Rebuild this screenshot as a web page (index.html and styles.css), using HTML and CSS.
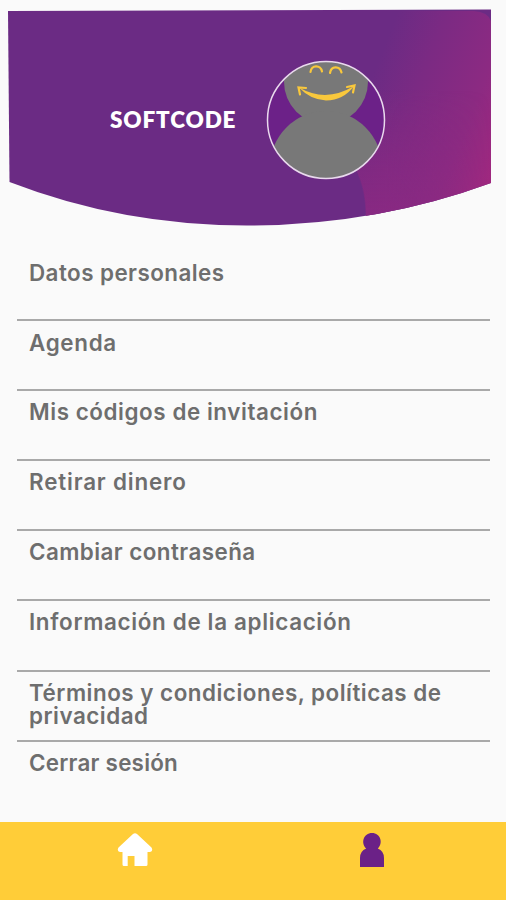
FILE: index.html
```html
<!DOCTYPE html>
<html lang="es">
<head>
<meta charset="utf-8">
<title>Softcode</title>
<link rel="stylesheet" href="styles.css">
</head>
<body>
<div class="app">
  <header class="hero">
    <svg class="hero-bg" viewBox="0 0 506 240" aria-hidden="true">
      <defs>
        <linearGradient id="glow" gradientUnits="userSpaceOnUse" x1="365" y1="95" x2="505" y2="150">
          <stop offset="0" stop-color="#6b2b84"/>
          <stop offset=".3" stop-color="#7b2a83"/>
          <stop offset=".7" stop-color="#8c2a82"/>
          <stop offset="1" stop-color="#a1287f"/>
        </linearGradient>
        <linearGradient id="low" gradientUnits="userSpaceOnUse" x1="0" y1="90" x2="0" y2="210">
          <stop offset="0" stop-color="#8a2982" stop-opacity="0"/>
          <stop offset="1" stop-color="#8a2982" stop-opacity=".8"/>
        </linearGradient>
        <linearGradient id="fade" x1="0" x2="1" y1="0" y2="0">
          <stop offset=".3" stop-color="#fff"/>
          <stop offset="1" stop-color="#000"/>
        </linearGradient>
        <mask id="lowfade" maskUnits="userSpaceOnUse" x="340" y="80" width="151" height="150"><path fill="url(#fade)" d="M340 80H491V230H340Z"/></mask>
        <clipPath id="banner"><path d="M8 11 L491 9.5 V183 Q375 225.500 247 225.500 Q122 225.500 9.500 182 Z"/></clipPath>
      </defs>
      <g clip-path="url(#banner)">
        <path fill="#6b2b84" d="M0 0H506V240H0Z"/>
        <path fill="url(#glow)" d="M365 11H474Q488 12 491 21V230H365Q368 200 358 175Z"/>
        <path fill="url(#low)" mask="url(#lowfade)" d="M340 80H491V230H365Q369 195 357 172Z"/>
      </g>
    </svg>
    <div class="profile">
      <h1 class="name">SOFTCODE</h1>
      <svg class="avatar" viewBox="0 0 120 120" role="img" aria-label="Avatar">
        <clipPath id="face"><circle cx="60" cy="60" r="58.500"/></clipPath>
        <g clip-path="url(#face)">
          <path fill="#6c2188" d="M0 0H120V120H0Z"/>
          <circle cx="60" cy="22" r="42" fill="#787878"/>
          <circle cx="60" cy="107" r="56" fill="#787878"/>
        </g>
        <g fill="none" stroke="#f9c83c" stroke-width="2.200" stroke-linecap="round">
          <path d="M44.500 12C45 4.500 55 4.500 56 11.500"/>
          <path d="M64 13C65 5.500 74 5.500 75.500 12.500"/>
          <path d="M34 34.500L32.500 27.500L40 28"/>
          <path d="M81 27L88.500 25.500L87 32.500"/>
        </g>
        <path fill="#f9c83c" d="M33 27.500Q60 43 88 26Q78 40 60 40.500Q44 39.500 33 27.500Z"/>
        <circle cx="60" cy="60" r="58.500" fill="none" stroke="#e9d9ed" stroke-width="1.500"/>
      </svg>
    </div>
  </header>
  <main class="menu">
    <a class="item personal">Datos personales</a>
    <a class="item agenda">Agenda</a>
    <a class="item codes">Mis códigos de invitación</a>
    <a class="item withdraw">Retirar dinero</a>
    <a class="item password">Cambiar contraseña</a>
    <a class="item about">Información de la aplicación</a>
    <a class="item terms">Términos y condiciones, políticas de privacidad</a>
    <a class="item logout">Cerrar sesión</a>
  </main>
  <nav class="tabs">
    <a class="tab"><svg class="icon home" viewBox="0 0 36 36"><path fill="#fff" d="M16 2Q18 .5 20 2L34.500 15.500Q36.500 19 33 20H30.500V32.500Q30.500 34 29 34H17.500V24H10.700V34H7Q5.500 34 5.500 32.500V20H3Q-.5 19 1.500 15.500Z"/></svg></a>
    <a class="tab"><svg class="icon person" viewBox="0 0 36 36"><path fill="#6b2187" d="M12.200 16.500C6.500 11 9.500 1 18 1S29.500 11 23.800 16.500Q30 19 30 26V35H6V26Q6 19 12.200 16.500Z"/></svg></a>
  </nav>
</div>
</body>
</html>
```
FILE: styles.css
```css
* { box-sizing: border-box; }
body { margin: 0; background: #fafafa; font-family: Inter, "Liberation Sans", sans-serif; }
.app { width: 506px; height: 900px; display: flex; flex-direction: column; overflow: hidden; }
.hero { height: 251px; display: grid; }
.hero-bg { grid-area: 1 / 1; width: 506px; height: 240px; }
.profile { grid-area: 1 / 1; z-index: 1; display: flex; height: 240px; align-items: center; padding-left: 110px; }
.name { margin: 0; width: 156px; color: #fff; font: 800 22.500px/26px Lato, sans-serif; letter-spacing: .850px; white-space: nowrap; }
.avatar { width: 120px; height: 120px; flex: none; }
.menu { height: 571px; padding: 0 16px 0 17px; display: grid; grid-template-rows: repeat(7, 70.1px) 1fr; }
.item { padding: 9px 30px 0 12px; border-bottom: 2px solid #a9a9a9; color: #6e6e6e; font-size: 22.400px; font-weight: 600; line-height: 23px; }
.item:last-child { border: 0; }
.personal { padding-top: 10px; letter-spacing: .450px; }
.agenda { padding-top: 10px; letter-spacing: .700px; }
.codes { letter-spacing: .570px; }
.withdraw { letter-spacing: .830px; }
.password { letter-spacing: .440px; }
.about { letter-spacing: .670px; }
.terms { letter-spacing: .510px; }
.logout { letter-spacing: .240px; }
.tabs { height: 78px; background: #ffcd38; display: grid; grid-template-columns: 270px 1fr; }
.tab { display: flex; justify-content: center; padding-top: 10px; }
.icon { width: 36px; height: 36px; }
.person { margin-right: 32px; }
```
